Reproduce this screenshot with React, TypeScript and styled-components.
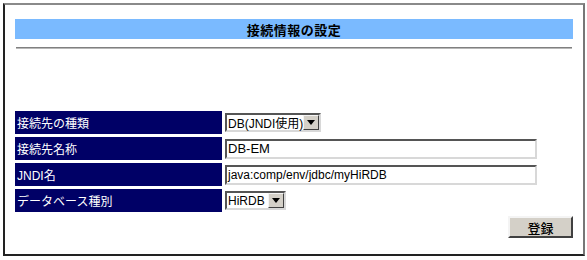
import styled, { createGlobalStyle } from "styled-components";

const GlobalStyle = createGlobalStyle`
  html, body {
    margin: 0;
    padding: 0;
    background: #ffffff;
  }
  body {
    padding: 3px;
    font-family: "Liberation Sans", "Noto Sans CJK JP", sans-serif;
  }
`;

const Frame = styled.div`
  width: 582px;
  box-sizing: border-box;
  border-style: solid;
  border-width: 2px;
  border-color: #8a8a8a #777777 #222222 #222222;
  padding: 14px 10px 16px 10px;
`;

const TitleBar = styled.div`
  height: 20px;
  background: #7abaff;
  display: flex;
  align-items: center;
  justify-content: center;
  font-size: 13px;
  font-weight: bold;
  color: #000000;
  letter-spacing: 0.5px;
`;

const Rule = styled.div`
  margin: 8px 1px 0 1px;
  height: 0;
  border-top: 1px solid #808080;
  border-bottom: 1px solid #b8b8b8;
`;

const FormGrid = styled.div`
  margin-top: 62px;
  display: grid;
  grid-template-columns: 207px 1fr;
  grid-auto-rows: 23px;
  column-gap: 3px;
  row-gap: 3px;
`;

const Label = styled.div`
  background: #000066;
  color: #ffffff;
  font-size: 12px;
  display: flex;
  align-items: center;
  padding-left: 2px;
`;

const Value = styled.div`
  display: flex;
  align-items: center;
`;

const TextBox = styled.div<{ $size?: number }>`
  width: 312px;
  height: 20px;
  box-sizing: border-box;
  border-style: solid;
  border-width: 2px;
  border-color: #555555 #d8d8d8 #d8d8d8 #555555;
  background: #ffffff;
  display: flex;
  align-items: center;
  padding-left: 1px;
  font-size: ${(p) => p.$size ?? 13}px;
  color: #000000;
  white-space: nowrap;
  overflow: hidden;
`;

const SelectBox = styled.div<{ $width: number }>`
  width: ${(p) => p.$width}px;
  height: 19px;
  box-sizing: border-box;
  border-style: solid;
  border-width: 2px;
  border-color: #555555 #d8d8d8 #d8d8d8 #555555;
  background: #ffffff;
  display: flex;
  align-items: stretch;
  font-size: 12px;
  color: #000000;
`;

const SelectText = styled.span`
  flex: 1;
  display: flex;
  align-items: center;
  padding-left: 1px;
  white-space: nowrap;
`;

const ArrowButton = styled.span`
  width: 16px;
  box-sizing: border-box;
  background: #d4d0c8;
  border-style: solid;
  border-width: 1px;
  border-color: #f4f4f4 #404040 #404040 #f4f4f4;
  display: flex;
  align-items: center;
  justify-content: center;

  &:after {
    content: "";
    border-left: 4px solid transparent;
    border-right: 4px solid transparent;
    border-top: 5px solid #000000;
  }
`;

const Actions = styled.div`
  margin-top: 4px;
  display: flex;
  justify-content: flex-end;
`;

const SubmitButton = styled.button`
  width: 65px;
  height: 22px;
  box-sizing: border-box;
  background: #d4d0c8;
  border-style: solid;
  border-width: 2px;
  border-color: #f4f4f4 #404040 #404040 #f4f4f4;
  font-family: "Noto Sans CJK JP", sans-serif;
  font-size: 13px;
  font-weight: 500;
  color: #000000;
  padding: 0;
  cursor: pointer;
`;

const App = () => {
  return (
    <>
      <GlobalStyle />
      <Frame>
        <TitleBar>接続情報の設定</TitleBar>
        <Rule />

        <FormGrid>
          <Label>接続先の種類</Label>
          <Value>
            <SelectBox $width={96}>
              <SelectText>DB(JNDI使用)</SelectText>
              <ArrowButton />
            </SelectBox>
          </Value>

          <Label>接続先名称</Label>
          <Value>
            <TextBox>DB-EM</TextBox>
          </Value>

          <Label>JNDI名</Label>
          <Value>
            <TextBox $size={12}>java:comp/env/jdbc/myHiRDB</TextBox>
          </Value>

          <Label>データベース種別</Label>
          <Value>
            <SelectBox $width={61}>
              <SelectText>HiRDB</SelectText>
              <ArrowButton />
            </SelectBox>
          </Value>
        </FormGrid>

        <Actions>
          <SubmitButton>登録</SubmitButton>
        </Actions>
      </Frame>
    </>
  );
};

export default App;
